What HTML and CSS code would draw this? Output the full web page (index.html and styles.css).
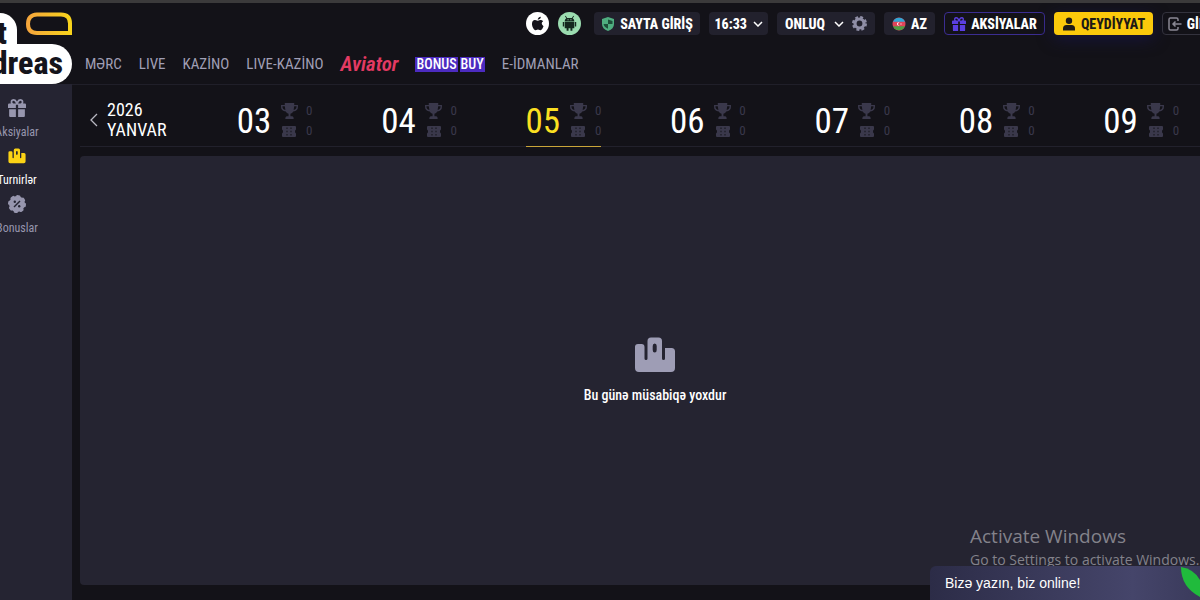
FILE: index.html
```html
<!DOCTYPE html>
<html lang="az">
<head>
<meta charset="utf-8">
<title>Turnirlər</title>
<link rel="stylesheet" href="styles.css">
</head>
<body>
<svg class="defs" aria-hidden="true">
  <symbol id="gift" viewBox="0 0 16 16"><path d="M0 5q0-1 1-1h1.500Q1.600.3 4.800 0 7 0 8 2.200 9 0 11.200 0 14.400.3 13.500 4H15q1 0 1 1v3H9V5H7v3H0zM4.800 1.600C3.500 1.700 3.400 3.800 5 4h2Q6.400 1.600 4.800 1.600zm6.400 0Q9.600 1.600 9 4h2c1.600-.2 1.500-2.300.2-2.400zM1 9h6v7H2q-1 0-1-1zm8 0h6v6q0 1-1 1H9z"/></symbol>
  <symbol id="podium" viewBox="0 0 42 36"><path fill-rule="evenodd" d="M4 7H7.500q3 0 3 3v11.500q0 1.500 1.500 1.500t1.500-1.500V4q0-3.500 3.500-3.500h7.500Q28 .5 28 4v17.500q0 1.500 1.500 1.500t1.500-1.500V11h6.500q3.500 0 3.500 3.500V31q0 4-4 4H5q-4 0-4-4V10q0-3 3-3zM20.700 6.500q-2 0-2 2.500v4q0 2.500 2 2.500t2-2.500V9q0-2.500-2-2.500z"/></symbol>
  <symbol id="cup" viewBox="0 0 18 17"><path fill-rule="evenodd" d="M4 0h10v2h4v2q0 4.500-5 5-1 2-3 2.500V14h2q1.500 0 1.500 3h-9Q4.500 14 6 14h2v-2.500Q6 11 5 9 0 8.500 0 4V2h4zm0 3.500H1.500Q1.500 7 4.600 7.400zm10 0-.6 3.900Q16.500 7 16.500 3.500z"/></symbol>
  <symbol id="ticket" viewBox="0 0 14 11"><path fill-rule="evenodd" d="M1 0h12q1 0 1 1v2.500q-1 .5-1 2t1 2V10q0 1-1 1H1q-1 0-1-1V7.500q1-.5 1-2t-1-2V1q0-1 1-1zm3.500 1.500v1.500h1V1.500zm0 3.300v1.500h1V4.800zm0 3.200v1.500h1V8zm4-6.500v1.500h1V1.500zm0 3.300v1.500h1V4.800zm0 3.200v1.500h1V8z"/></symbol>
  <symbol id="chevron" viewBox="0 0 10 6"><path d="M1 1l4 4 4-4" fill="none" stroke="currentColor" stroke-width="1.500"/></symbol>
</svg>

<header class="header">
  <a class="logo" href="#" aria-label="Ana səhifə">
    <svg class="logo-ring" viewBox="0 0 46 24"><defs><linearGradient id="gold"><stop offset="0" stop-color="#f5a63c"/><stop offset="1" stop-color="#f8d31c"/></linearGradient></defs><path d="M11 2.500h24q9 0 9 9V21H11Q2 21 2 12t9-9.500z" fill="none" stroke="url(#gold)" stroke-width="4"/></svg>
    <span class="logo-top">t</span>
    <span class="logo-bottom">dreas</span>
  </a>
  <div class="tools">
    <a class="store apple" href="#" aria-label="iOS"><svg viewBox="0 0 24 24"><path fill="#15141b" d="M15.500 5q.1 2.500-3.300 3.200Q12.300 5.500 15.500 5zM12 9q1.200 0 2.600-.6 2.200-.2 3.300 1.300-3.200 2.200.4 5.200-1 3-2.800 4.100-1.400-.2-3-.7-1.800.6-3 .7C5.900 17 4.700 9 9 8.400q1.200-.1 3 .6z"/></svg></a>
    <a class="store android" href="#" aria-label="Android"><svg viewBox="0 0 24 24"><path fill="#15281f" fill-rule="evenodd" d="M8 4l1.500 2.200h5L16 4l.7.5-1.300 2Q17 7.800 17 9.500H7q0-1.700 1.600-3L7.300 4.500zm2 3.500v1h1v-1zm3 0v1h1v-1zM7 10h10v7h-2v2.500h-2V17h-2v2.500H9V17H7zm-2 .5h1.400V15H5zm12.600 0H19V15h-1.400z"/></svg></a>
    <button class="btn login"><svg class="i14" viewBox="0 0 14 14"><path fill="#4fae80" d="M7 0l6 2v5q0 5-6 7-6-2-6-7V2z"/><path fill="#1d4f3a" d="M7 2.500V7h4.500V4zM7 7v4.800Q3 10 2.600 7z"/></svg>SAYTA GİRİŞ</button>
    <div class="btn time"><select class="picker" aria-label="Saat"><option>16:33</option></select><svg class="chev"><use href="#chevron"/></svg></div>
    <div class="btn odds"><select class="picker" aria-label="Əmsal növü"><option>ONLUQ</option></select><svg class="chev"><use href="#chevron"/></svg><button class="gear" aria-label="Parametrlər"><svg viewBox="0 0 14 14"><circle cx="7" cy="7" r="4.200" fill="none" stroke="#8f8ea6" stroke-width="3"/><circle cx="7" cy="7" r="6" fill="none" stroke="#8f8ea6" stroke-width="2" stroke-dasharray="2.700 2"/></svg></button></div>
    <button class="btn lang"><svg class="i14" viewBox="0 0 14 14"><circle cx="7" cy="7" r="6.500" fill="#e04459"/><path fill="#2fa6d6" d="M1 4.700a6.500 6.500 0 0 1 12 0z"/><path fill="#4d9d42" d="M1 9.300a6.500 6.500 0 0 0 12 0z"/><path fill="#fff" d="M7.500 5.500a1.700 1.700 0 1 0 0 3 1.400 1.400 0 1 1 0-3zM9 6l.3.7.7.3-.7.3L9 8l-.3-.7L8 7l.7-.3z"/></svg>AZ</button>
    <button class="btn promo"><svg class="i14 violet"><use href="#gift"/></svg>AKSİYALAR</button>
    <button class="btn signup"><svg class="i14" viewBox="0 0 14 14"><circle cx="7" cy="3.700" r="3.200"/><path d="M1 13.500v-2Q1 8 4.500 8h5Q13 8 13 11.500v2z"/></svg>QEYDİYYAT</button>
    <button class="btn enter"><svg class="i14" viewBox="0 0 14 14"><path d="M10 4V2.500Q10 1 8.500 1h-6Q1 1 1 2.500v9Q1 13 2.500 13h6q1.500 0 1.500-1.500V10M13.500 7H5m2.500-2.500L5 7l2.500 2.500" fill="none" stroke="#8a8894" stroke-width="1.500"/></svg>GİRİŞ</button>
  </div>
  <nav class="nav">
    <a href="#">MƏRC</a>
    <a href="#">LIVE</a>
    <a href="#">KAZİNO</a>
    <a href="#">LIVE-KAZİNO</a>
    <a class="aviator" href="#">Aviator</a>
    <a class="bonus" href="#"><span>BONUS</span><span>BUY</span></a>
    <a href="#">E-İDMANLAR</a>
  </nav>
</header>

<div class="body">
  <aside class="side">
    <a href="#"><svg><use href="#gift"/></svg><span>Aksiyalar</span></a>
    <a class="on" href="#"><svg><use href="#podium"/></svg><span>Turnirlər</span></a>
    <a href="#"><svg viewBox="0 0 18 18"><circle cx="9" cy="9" r="8"/><circle cx="9" cy="9" r="8" fill="none" stroke="currentColor" stroke-width="2" stroke-linecap="round" stroke-dasharray="2.200 4.083"/><path d="M6 12l6-6" stroke="#252432" stroke-width="1.500"/><circle cx="6.800" cy="6.800" r="1.200" fill="#252432"/><circle cx="11.200" cy="11.200" r="1.200" fill="#252432"/></svg><span>Bonuslar</span></a>
  </aside>
  <main class="main">
    <div class="dates">
      <button class="month"><svg viewBox="0 0 8 14"><path d="M7 1L1 7l6 6" fill="none" stroke="#b9b8c2" stroke-width="1.300"/></svg><span>2026<br>YANVAR</span></button>
      <div class="days">
        <button class="day"><b>03</b><span class="counts"><svg class="cup"><use href="#cup"/></svg><i>0</i><svg class="ticket"><use href="#ticket"/></svg><i>0</i></span></button>
        <button class="day"><b>04</b><span class="counts"><svg class="cup"><use href="#cup"/></svg><i>0</i><svg class="ticket"><use href="#ticket"/></svg><i>0</i></span></button>
        <button class="day on"><b>05</b><span class="counts"><svg class="cup"><use href="#cup"/></svg><i>0</i><svg class="ticket"><use href="#ticket"/></svg><i>0</i></span></button>
        <button class="day"><b>06</b><span class="counts"><svg class="cup"><use href="#cup"/></svg><i>0</i><svg class="ticket"><use href="#ticket"/></svg><i>0</i></span></button>
        <button class="day"><b>07</b><span class="counts"><svg class="cup"><use href="#cup"/></svg><i>0</i><svg class="ticket"><use href="#ticket"/></svg><i>0</i></span></button>
        <button class="day"><b>08</b><span class="counts"><svg class="cup"><use href="#cup"/></svg><i>0</i><svg class="ticket"><use href="#ticket"/></svg><i>0</i></span></button>
        <button class="day"><b>09</b><span class="counts"><svg class="cup"><use href="#cup"/></svg><i>0</i><svg class="ticket"><use href="#ticket"/></svg><i>0</i></span></button>
      </div>
    </div>
    <section class="panel">
      <svg class="empty-icon"><use href="#podium"/></svg>
      <p>Bu günə müsabiqə yoxdur</p>
    </section>
  </main>
</div>

<div class="watermark"><div class="wm-title">Activate Windows</div><div>Go to Settings to activate Windows.</div></div>
<button class="chat">Bizə yazın, biz online!<svg viewBox="0 0 19 33"><path d="M0 0q13 2 19 13v17Q0 20 0 0z" fill="#20bb3c"/></svg></button>
</body>
</html>
```
FILE: styles.css
```css
* { box-sizing: border-box; }
body {
  margin: 0;
  height: 100vh;
  display: flex;
  flex-direction: column;
  overflow: hidden;
  background: #131218;
  color: #fff;
  font-family: "Roboto Condensed", "Liberation Sans Narrow", Roboto, sans-serif;
  font-size: 14px;
  border-top: 3px solid #3b3a3b;
}
a { color: inherit; text-decoration: none; }
button, select { font: inherit; color: inherit; background: none; border: 0; padding: 0; white-space: nowrap; }
svg { fill: currentColor; display: block; flex: none; }
.defs { display: none; }

.header { position: relative; flex: none; padding-top: 9px; }
.tools { display: flex; align-items: center; justify-content: flex-end; gap: 9px; height: 23px; margin-right: -24px; }
.store { width: 23px; height: 23px; border-radius: 50%; flex: none; }
.apple { background: #fff; }
.android { background: #9bdcb0; margin-right: 4px; }
.btn {
  height: 23px;
  flex: none;
  display: flex;
  align-items: center;
  justify-content: center;
  gap: 5px;
  border-radius: 4px;
  background: #22212d;
  font-weight: 800;
}
.i14 { width: 14px; height: 14px; }
.picker { appearance: none; outline: 0; }
.chev { width: 10px; height: 6px; }
.login { width: 106px; }
.time { width: 59px; }
.odds { width: 98px; gap: 8px; }
.gear { width: 15px; height: 15px; }
.lang { width: 51px; }
.promo { width: 101px; background: none; border: 1px solid #3b2d91; }
.violet { color: #5b3fe0; }
.signup { width: 99px; background: #fbc90b; color: #1d1a16; box-shadow: 0 4px 16px #17153c; }
.enter { width: 62px; background: none; border: 1px solid #33323d; }

.logo { position: absolute; left: 0; top: 9px; width: 72px; height: 72px; color: #15141b; font-size: 32px; font-weight: 800; overflow: hidden; }
.logo-ring { position: absolute; left: 26px; top: 0; width: 46px; height: 24px; }
.logo-top, .logo-bottom { position: absolute; background: #fff; }
.logo-top { left: 0; top: 1px; width: 17px; height: 32px; border-radius: 0 17px 0 0; line-height: 40px; text-indent: -3px; }
.logo-bottom { left: 0; right: 0; top: 32px; height: 40px; border-radius: 0 20px 20px 0; padding-right: 9px; line-height: 38px; display: flex; justify-content: flex-end; }

.nav { display: flex; align-items: center; gap: 17px; height: 50px; padding: 8px 0 0 85px; margin-bottom: -1px; font-size: 15px; color: #a09fb5; }
.aviator { color: #e33a63; font-size: 21px; font-weight: 600; font-style: italic; }
.bonus { display: flex; gap: 2px; color: #fff; font-size: 14px; line-height: 15px; font-weight: 500; }
.bonus span { background: #4c2bc0; padding: 0 1px; }

.body { flex: 1; display: flex; min-height: 0; }
.side { width: 72px; flex: none; background: #252432; color: #9796ae; font-size: 12px; padding-top: 15px; }
.side a { display: flex; flex-direction: column; align-items: center; gap: 8px; height: 48px; width: 34px; line-height: 14px; }
.side svg { width: 18px; height: 18px; overflow: visible; }
.side .on svg { color: #fbd315; }
.side .on { color: #fff; }
.main { flex: 1; min-width: 0; display: flex; flex-direction: column; padding-left: 8px; border-top: 1px solid #201f29; }
.dates { display: flex; height: 62px; flex: none; border-bottom: 1px solid #22212c; }
.month { width: 122px; flex: none; display: flex; align-items: center; gap: 9px; padding: 8px 0 0 10px; font-size: 18px; line-height: 20px; text-align: left; }
.month svg { width: 8px; height: 14px; }
.days { flex: 1; display: grid; grid-template-columns: repeat(7, 1fr); margin-right: -13px; }
.day { height: 62px; justify-self: center; width: 75px; display: flex; align-items: center; justify-content: flex-start; gap: 9px; padding-top: 10px; }
.day b { font-weight: 400; font-size: 35px; }
.counts { display: grid; grid-template-columns: 18px 8px; gap: 4px 7px; align-items: center; justify-items: center; color: #3a384b; font-size: 13px; line-height: 16px; }
.counts i { font-style: normal; }
.cup { width: 17px; height: 16px; }
.ticket { width: 14px; height: 11px; }
.day.on { box-shadow: inset 0 -1px #c9a539; }
.day.on b { color: #fbdf21; }
.panel { flex: 1; margin: 9px -30px 15px 0; border-radius: 4px 0 0 4px; background: #252431; display: flex; flex-direction: column; align-items: center; justify-content: center; font-size: 14px; font-weight: 500; }
.panel p { margin: 12px 0 0; line-height: 20px; }
.empty-icon { width: 42px; height: 36px; color: #9e9db5; }

.watermark { position: absolute; right: 0; bottom: 30px; width: 230px; color: #83828b; font: 14px/20px "Open Sans", sans-serif; white-space: nowrap; }
.wm-title { font-size: 19px; line-height: 27px; }
.chat { position: absolute; right: 0; bottom: 0; width: 270px; height: 34px; padding-left: 15px; border-radius: 6px 0 0 0; background: linear-gradient(90deg, #2c2c47, #45456a 75%, #3a3a5b); font: 14px "Liberation Sans", sans-serif; display: flex; align-items: center; justify-content: space-between; }
.chat svg { width: 19px; height: 33px; }
```
